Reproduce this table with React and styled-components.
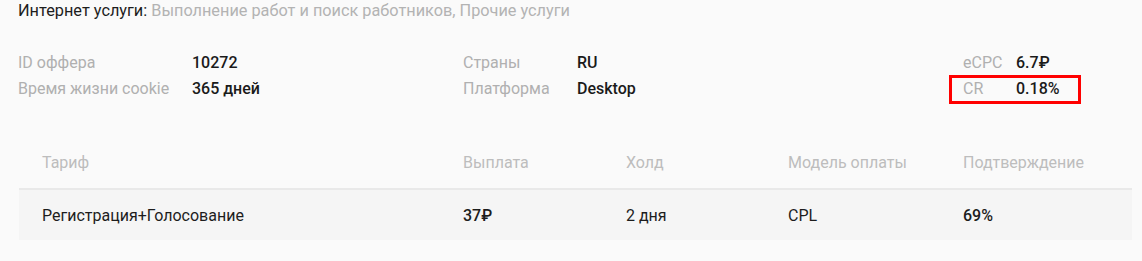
import React from "react";
import styled, { createGlobalStyle } from "styled-components";

const GlobalStyle = createGlobalStyle`
  body {
    margin: 0;
    background: #fafafa;
    font-family: Roboto, "Liberation Sans", sans-serif;
    font-size: 16px;
    color: #212121;
  }
`;

const Page = styled.div`
  padding: 1px 10px 0 18px;
`;

const Category = styled.div`
  line-height: 20px;
  font-size: 16.3px;
  color: #1d1d1d;
`;

const Muted = styled.span`
  color: #b3b3b3;
`;

const Info = styled.div`
  display: grid;
  grid-template-columns: 445px 500px 1fr;
  margin-top: 28px;
`;

const Group = styled.div`
  display: grid;
  grid-template-columns: ${(p) => p.$labelWidth}px auto;
  grid-auto-rows: 26px;
  align-items: center;
  justify-content: start;
`;

const Label = styled.span`
  color: #b0b0b0;
`;

const Value = styled.span`
  font-weight: 500;
  color: #1a1a1a;
`;

const Marked = styled.div`
  position: relative;
  align-self: stretch;
  display: flex;
  align-items: center;
  &::after {
    content: "";
    position: absolute;
    left: ${(p) => p.$left}px;
    right: ${(p) => p.$right}px;
    top: 0;
    bottom: -3px;
    border: 3px solid #ff0000;
    border-left-width: ${(p) => (p.$left === 0 ? 0 : 3)}px;
    border-right-width: ${(p) => (p.$right === 0 ? 0 : 3)}px;
  }
`;

const Table = styled.div`
  margin-top: 35px;
  width: 1113px;
  margin-left: 1px;
`;

const Row = styled.div`
  display: grid;
  grid-template-columns: 421px 163px 162px 175px 1fr;
  align-items: center;
  height: ${(p) => (p.$head ? 52 : 50)}px;
  background: ${(p) => (p.$head ? "transparent" : "#f5f5f5")};
  border-bottom: ${(p) => (p.$head ? "2px solid #e9e9e9" : "none")};
`;

const Cell = styled.div`
  padding-left: 23px;
  color: ${(p) => (p.$head ? "#bdbdbd" : "#1d1d1d")};
  font-weight: ${(p) => (p.$strong ? 500 : 400)};
`;

export default function App() {
  return (
    <Page>
      <GlobalStyle />
      <Category>
        Интернет услуги: <Muted>Выполнение работ и поиск работников, Прочие услуги</Muted>
      </Category>
      <Info>
        <Group $labelWidth={174}>
          <Label>ID оффера</Label>
          <Value>10272</Value>
          <Label>Время жизни cookie</Label>
          <Value>365 дней</Value>
        </Group>
        <Group $labelWidth={114}>
          <Label>Страны</Label>
          <Value>RU</Value>
          <Label>Платформа</Label>
          <Value>Desktop</Value>
        </Group>
        <Group $labelWidth={53}>
          <Label>eCPC</Label>
          <Value>6.7₽</Value>
          <Marked $left={-14} $right={0}>
            <Label>CR</Label>
          </Marked>
          <Marked $left={0} $right={-21}>
            <Value>0.18%</Value>
          </Marked>
        </Group>
      </Info>
      <Table>
        <Row $head>
          <Cell $head>Тариф</Cell>
          <Cell $head>Выплата</Cell>
          <Cell $head>Холд</Cell>
          <Cell $head>Модель оплаты</Cell>
          <Cell $head>Подтверждение</Cell>
        </Row>
        <Row>
          <Cell>Регистрация+Голосование</Cell>
          <Cell $strong>37₽</Cell>
          <Cell>2 дня</Cell>
          <Cell>CPL</Cell>
          <Cell $strong>69%</Cell>
        </Row>
      </Table>
    </Page>
  );
}
